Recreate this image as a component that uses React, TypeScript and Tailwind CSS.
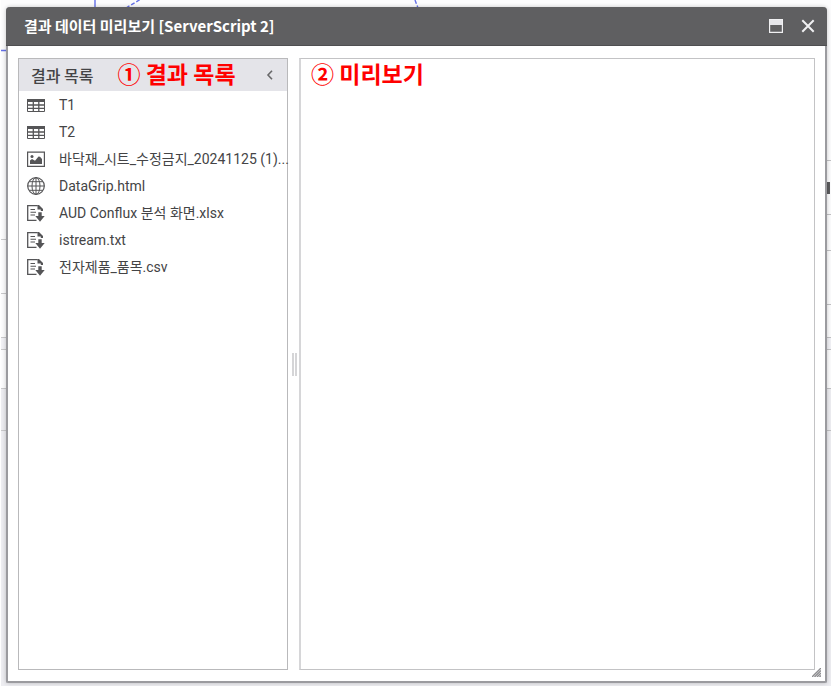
import type { ReactNode } from "react";

type FileKind = "table" | "image" | "web" | "download";

const results: { name: string; kind: FileKind }[] = [
  { name: "T1", kind: "table" },
  { name: "T2", kind: "table" },
  { name: "바닥재_시트_수정금지_20241125 (1)...", kind: "image" },
  { name: "DataGrip.html", kind: "web" },
  { name: "AUD Conflux 분석 화면.xlsx", kind: "download" },
  { name: "istream.txt", kind: "download" },
  { name: "전자제품_품목.csv", kind: "download" },
];

const icons: Record<FileKind, ReactNode> = {
  table: (
    <>
      <path d="M.5 3.5h17v12H.5z" />
      <path d="M0 3h18v3H0z" fill="currentColor" stroke="none" />
      <path d="M1 9h16M1 12.3h16M6.3 6v10M11.8 6v10" strokeWidth="1.3" />
    </>
  ),
  image: (
    <>
      <path d="M.6 2.1h16.8v14.3H.6z" strokeWidth="1.2" />
      <circle cx="5" cy="6.5" r="1.5" fill="currentColor" stroke="none" />
      <path
        d="M3 14v-3.5l2-1.5 3 1.8 3.5-4.3 1.5.3L15 9v5z"
        fill="currentColor"
        stroke="none"
      />
    </>
  ),
  web: (
    <>
      <circle cx="9" cy="9" r="8.3" strokeWidth="1.2" />
      <ellipse cx="9" cy="9" rx="4" ry="8.3" />
      <path d="M9 .7v16.6M.7 9h16.6M2.2 4.7h13.6M2.2 13.3h13.6" />
    </>
  ),
  download: (
    <>
      <path d="M9.5 16.4H.7V1.6h10" strokeWidth="1.3" />
      <path d="M10.5 1v4.5h3.3V7H16V5l-4-4z" fill="currentColor" stroke="none" />
      <path d="M3.5 5.5H8M3.5 8.2H9M3.5 11H8" strokeWidth="1.1" />
      <path d="M11.3 8.3h3.4V12h3L13 17.7 8.3 12h3z" fill="currentColor" stroke="none" />
    </>
  ),
};

function FileIcon({ kind }: { kind: FileKind }) {
  return (
    <svg
      viewBox="0 0 18 18"
      className="size-[18px] shrink-0 text-[#555557]"
      fill="none"
      stroke="currentColor"
      aria-hidden="true"
    >
      {icons[kind]}
    </svg>
  );
}

// The report canvas that stays visible around the edges of the dialog.
function Backdrop() {
  return (
    <svg className="absolute inset-0 size-full" aria-hidden="true">
      <rect x="1" width="830" height="100%" fill="#fcfcfd" />
      <rect x="1" y="338" width="830" height="12" fill="#f1f1f5" />
      <rect x="1" y="388" width="830" height="100%" fill="#ededf1" />
      <path d="M1 239.5h10M1 293.5h10M1 337.5h10M1 349.5h10M1 388.5h10M1 430.5h10" stroke="#c9c9cb" />
      <path
        d="M820 160.5h11M820 214.5h11M820 250.5h11M820 304.5h11M820 337.5h11M820 349.5h11M820 388.5h11M820 430.5h11"
        stroke="#c2c2c4"
      />
      <path d="M825 182h5v12h-5z" fill="#5c5c5e" />
      <path d="M1 50.5h8M95 0v10" stroke="#6470e8" strokeWidth="1.4" />
      <path d="M126 8l15-9M415 0l3 8" stroke="#6470e8" strokeWidth="1.4" strokeDasharray="4 2" />
    </svg>
  );
}

export default function App() {
  return (
    <main className="relative h-screen min-h-80 overflow-hidden bg-white pt-[7px] pr-2.5 pb-[3px] pl-1.5 font-['Noto_Sans_CJK_KR',sans-serif] text-[#444446]">
      <Backdrop />
      <section
        role="dialog"
        aria-labelledby="dialog-title"
        className="relative flex h-full flex-col rounded-t-[4px] rounded-b-[2px] border-2 border-t-0 border-[#9b9b9f] bg-white shadow-[0_0_4px_rgba(0,0,0,0.22)]"
      >
        <header className="-mx-0.5 flex h-[39px] shrink-0 items-center rounded-t-[4px] border-b border-[#4f4f51] bg-[#5f5f61] pr-3 pl-[18px] text-white">
          <h1 id="dialog-title" className="flex-1 text-[15px] font-bold whitespace-nowrap">
            결과 데이터 미리보기 [ServerScript 2]
          </h1>
          <button type="button" aria-label="Maximize" className="mr-[18px]">
            <svg viewBox="0 0 14 14" className="size-3.5" fill="none">
              <path d="M.6.6h12.8v12.8H.6z" stroke="#f0f0f2" strokeWidth="1.2" />
              <path d="M1 1h12v5H1z" fill="#e6e6ea" />
            </svg>
          </button>
          <button type="button" aria-label="Close">
            <svg viewBox="0 0 14 14" className="size-3.5" fill="none">
              <path d="M1.3 1.3l11.4 11.4M12.7 1.3L1.3 12.7" stroke="#f0f0f2" strokeWidth="2" />
            </svg>
          </button>
        </header>

        <div className="flex min-h-0 flex-1 px-2.5 pt-3 pb-[11px]">
          <aside className="flex w-[270px] shrink-0 flex-col border border-[#b9b9bb]">
            <div className="flex h-8 shrink-0 items-center bg-[#e4e4e9] px-3">
              <h2 className="text-base font-medium whitespace-nowrap">결과 목록</h2>
              <strong className="ml-6 flex-1 pb-1 text-[23px] leading-6 font-bold whitespace-nowrap text-[#ff0000]">
                ① 결과 목록
              </strong>
              <button type="button" aria-label="Collapse list">
                <svg viewBox="0 0 10 10" className="size-2.5" fill="none">
                  <path d="M7 .7L3 5l4 4.3" stroke="#68686a" strokeWidth="1.6" />
                </svg>
              </button>
            </div>
            <ul className="font-[Roboto,'Noto_Sans_CJK_KR',sans-serif] text-sm">
              {results.map((item) => (
                <li key={item.name}>
                  <button
                    type="button"
                    className="flex h-[27px] w-full items-center gap-3.5 pl-2 text-left whitespace-nowrap"
                  >
                    <FileIcon kind={item.kind} />
                    <span>{item.name}</span>
                  </button>
                </li>
              ))}
            </ul>
          </aside>

          <div
            role="separator"
            aria-orientation="vertical"
            className="flex w-[11px] shrink-0 items-center justify-center gap-px pl-0.5"
          >
            <span className="h-[23px] w-0.5 bg-[#d5d5d7]" />
            <span className="h-[23px] w-0.5 bg-[#d5d5d7]" />
          </div>

          <section className="min-w-0 flex-1 border border-l-2 border-[#c3c3c5] border-l-[#d6d6d8] pt-0.5 pl-2.5">
            <strong className="block text-[23px] leading-6 font-bold text-[#ff0000]">② 미리보기</strong>
          </section>
        </div>

        <svg viewBox="0 0 9 9" className="absolute right-1 bottom-1 size-[9px]" aria-hidden="true">
          <path d="M0 9l9-9M2.5 9l6.5-6.5M5 9l4-4M7.5 9L9 7.5" stroke="#8d8d90" strokeWidth="1.4" />
        </svg>
      </section>
    </main>
  );
}
